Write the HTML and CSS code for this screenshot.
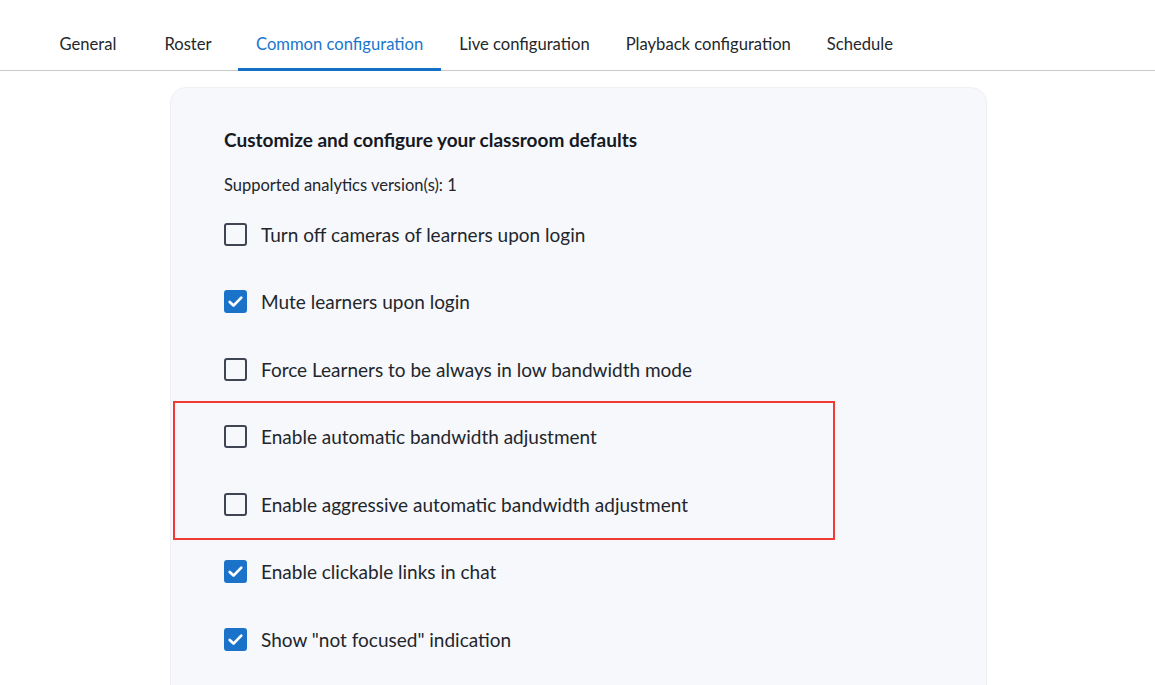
FILE: index.html
```html
<!DOCTYPE html>
<html>
<head>
    <meta charset="utf-8">
    <title>Common configuration</title>
    <link rel="stylesheet" href="styles.css">
</head>
<body>
    <div class="tabs">
        <a class="tab" href="#">General</a>
        <a class="tab" href="#">Roster</a>
        <a class="tab active" href="#">Common configuration</a>
        <a class="tab" href="#">Live configuration</a>
        <a class="tab" href="#">Playback configuration</a>
        <a class="tab" href="#">Schedule</a>
    </div>

    <div class="card">
        <h2 class="card-title">Customize and configure your classroom defaults</h2>
        <p class="card-sub">Supported analytics version(s): 1</p>

        <ul class="options">
            <li class="option"><span class="box"></span>Turn off cameras of learners upon login</li>
            <li class="option"><span class="box checked"></span>Mute learners upon login</li>
            <li class="option"><span class="box"></span>Force Learners to be always in low bandwidth mode</li>
            <li class="group">
                <ul class="options">
                    <li class="option"><span class="box"></span>Enable automatic bandwidth adjustment</li>
                    <li class="option"><span class="box"></span>Enable aggressive automatic bandwidth adjustment</li>
                </ul>
            </li>
            <li class="option"><span class="box checked"></span>Enable clickable links in chat</li>
            <li class="option"><span class="box checked"></span>Show "not focused" indication</li>
        </ul>
    </div>
</body>
</html>
```

FILE: styles.css
```css
* {
    margin: 0;
    padding: 0;
    box-sizing: border-box;
    list-style: none;
    text-decoration: none;
}

body {
    background: #ffffff;
    color: #1d2129;
    font-family: "Lato", "Noto Sans", sans-serif;
    height: 685px;
    overflow: hidden;
}

/* tab strip */
.tabs {
    display: flex;
    padding-left: 38px;
    border-bottom: 1px solid #c9c9c9;
}

.tab {
    display: block;
    min-width: 100px;
    text-align: center;
    padding: 32px 18px 12px;
    font-size: 16.6px;
    line-height: 24px;
    color: #24272c;
    border-bottom: 3px solid transparent;
    margin-bottom: -1px;
}

.tab.active {
    color: #1b75cc;
    border-bottom-color: #1470c6;
}

/* settings card */
.card {
    width: 817px;
    margin: 16px 0 0 170px;
    padding: 40px 53px;
    background: #f7f8fc;
    border: 1px solid #eef0f4;
    border-radius: 16px;
    min-height: 700px;
}

.card-title {
    font-size: 19px;
    font-weight: 700;
    line-height: 24px;
    color: #16191f;
}

.card-sub {
    margin-top: 23px;
    font-size: 16.5px;
    line-height: 20px;
    color: #22262c;
}

.options {
    margin-top: 5.5px;
}

.option {
    display: flex;
    align-items: center;
    height: 67.5px;
    font-size: 19px;
    color: #22262c;
}

/* highlighted pair of bandwidth options */
.group {
    margin: -2px 0 -2px -51px;
    padding-left: 49px;
    width: 662px;
    border: 2px solid #ef3b33;
}

.group .options {
    margin-top: 0;
}

.box {
    width: 23px;
    height: 23px;
    margin: 0 14px 0 0;
    border: 2px solid #3f4552;
    border-radius: 3px;
    flex-shrink: 0;
}

.box.checked {
    border-color: #1a72c9;
    background: #1a72c9 url("data:image/svg+xml,%3Csvg xmlns='http://www.w3.org/2000/svg' viewBox='0 0 20 20'%3E%3Cpath d='M4.5 10.5l3.6 3.4 7.4-7.6' fill='none' stroke='white' stroke-width='2.6' stroke-linecap='round' stroke-linejoin='round'/%3E%3C/svg%3E") center / 21px no-repeat;
}
```
